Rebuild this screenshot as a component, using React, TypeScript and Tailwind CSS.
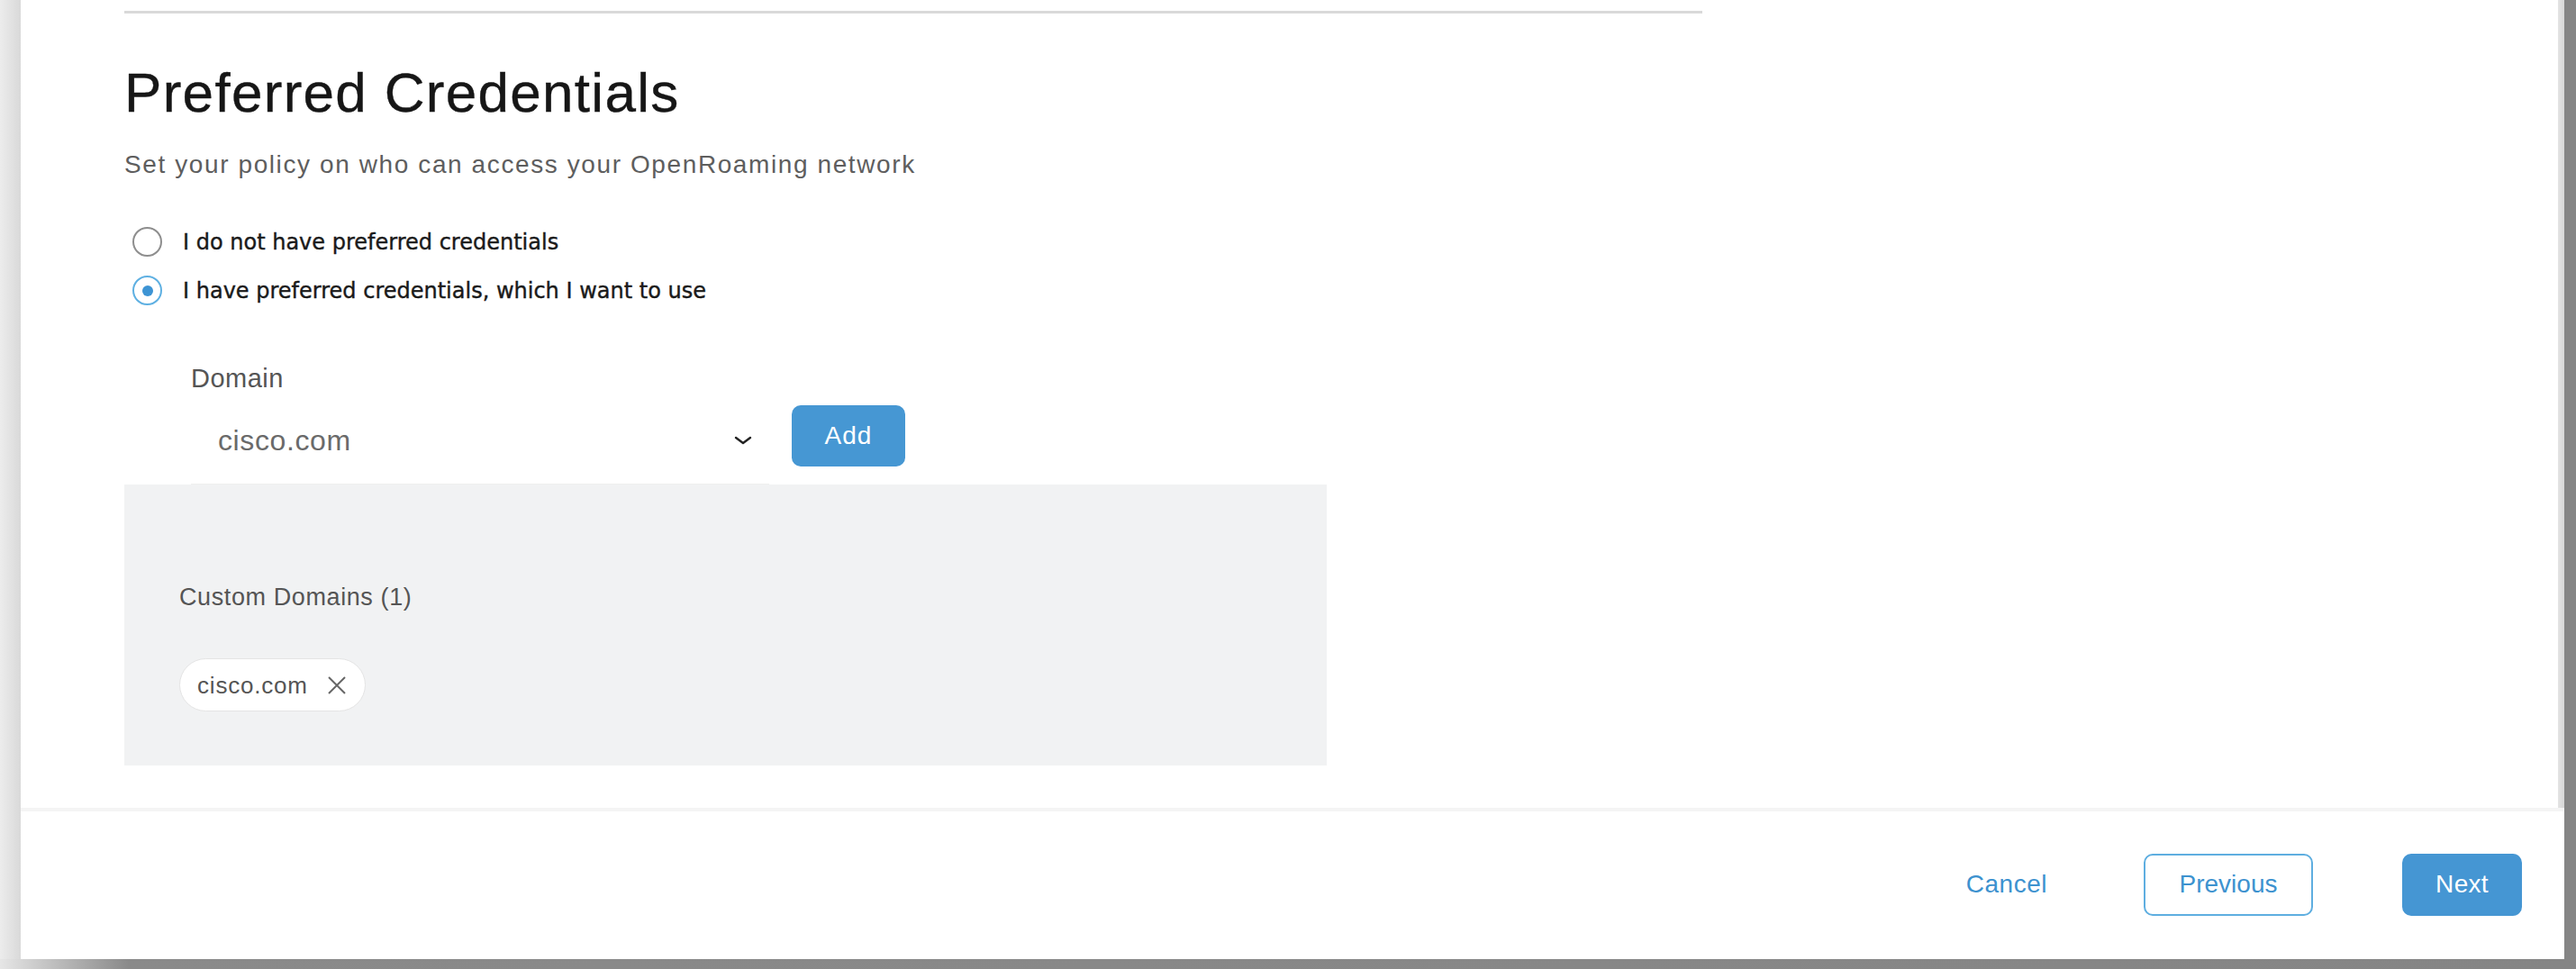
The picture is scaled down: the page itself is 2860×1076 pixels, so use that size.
import { useState } from 'react';

const sans = "font-['Liberation_Sans',Arial,sans-serif]";

function Radio({ checked, label, onClick }: { checked: boolean; label: string; onClick: () => void }) {
  return (
    <button type="button" onClick={onClick} className="flex h-[33px] items-center gap-[23px] pl-[9px] text-left">
      <span
        className={
          checked
            ? 'flex h-[33px] w-[33px] items-center justify-center rounded-full border-2 border-[#5eb0e2] bg-white'
            : 'flex h-[33px] w-[33px] items-center justify-center rounded-full border-2 border-[#8e8e8e] bg-white'
        }
      >
        {checked && <span className="h-[12px] w-[12px] rounded-full bg-[#3d94d4]" />}
      </span>
      <span className="font-['DejaVu_Sans',sans-serif] text-[24px] leading-none text-[#1a1a1a] [-webkit-text-stroke:0.4px_#1a1a1a]">
        {label}
      </span>
    </button>
  );
}

export default function App() {
  const [choice, setChoice] = useState(1);
  const [domains, setDomains] = useState(['cisco.com']);

  return (
    <div className={`flex h-[1076px] w-[2860px] flex-col bg-[#858585] ${sans}`}>
      <div className="flex flex-1">
        <div className="w-[23px] bg-gradient-to-r from-[#ececec] to-[#d9d9d9]" />

        <div className="flex flex-1 flex-col bg-white">
          {/* scrolling body */}
          <div className="flex h-[897px]">
            <div className="flex-1 pl-[115px] pt-[12px]">
              <div className="h-[3px] w-[1752px] bg-[#d9d9d9]" />

              <h1 className="mt-[57px] text-[62px] leading-none font-normal tracking-[1.3px] text-[#161616] [-webkit-text-stroke:0.4px_#161616]">
                Preferred Credentials
              </h1>
              <p className="mt-[35px] text-[28px] leading-none tracking-[1.6px] text-[#5e5e5e]">
                Set your policy on who can access your OpenRoaming network
              </p>

              <div className="mt-[55px] flex flex-col gap-[21px]">
                <Radio checked={choice === 0} label="I do not have preferred credentials" onClick={() => setChoice(0)} />
                <Radio
                  checked={choice === 1}
                  label="I have preferred credentials, which I want to use"
                  onClick={() => setChoice(1)}
                />
              </div>

              <div className="pl-[74px]">
                <div className="mt-[67px] text-[29px] leading-none tracking-[0.5px] text-[#555]">Domain</div>
                <div className="mt-[15px] flex items-start gap-[25px]">
                  <div className="flex h-[88px] w-[642px] items-center justify-between border-b border-[#efefef] pb-[10px] pl-[30px] pr-[19px]">
                    <span className="text-[32px] leading-none tracking-[0.6px] text-[#6a6a6a]">cisco.com</span>
                    <svg width="20" height="10" viewBox="0 0 20 10" fill="none">
                      <path d="M2 2l8 6 8-6" stroke="#222" strokeWidth="2.4" strokeLinecap="round" strokeLinejoin="round" />
                    </svg>
                  </div>
                  <button
                    type="button"
                    onClick={() => !domains.includes('cisco.com') && setDomains([...domains, 'cisco.com'])}
                    className="h-[68px] w-[126px] rounded-[10px] bg-[#4697d3] text-[28px] leading-none tracking-[1px] text-white"
                  >
                    Add
                  </button>
                </div>
              </div>

              <div className="w-[1335px] bg-[#f1f2f3] pt-[112px] pb-[59px] pl-[61px]">
                <div className="text-[27px] leading-none tracking-[0.6px] text-[#555]">
                  Custom Domains ({domains.length})
                </div>
                <div className="mt-[54px] flex h-[60px] gap-3">
                  {domains.map((d) => (
                    <div
                      key={d}
                      className="flex h-[59px] items-center gap-[21px] rounded-full border border-[#e4e4e4] bg-white pl-[19px] pr-[20px]"
                    >
                      <span className="text-[26px] leading-none tracking-[0.8px] text-[#555]">{d}</span>
                      <button type="button" onClick={() => setDomains(domains.filter((x) => x !== d))}>
                        <svg width="22" height="20" viewBox="0 0 22 20" fill="none">
                          <path d="M2 1l18 18M20 1L2 19" stroke="#666" strokeWidth="2" />
                        </svg>
                      </button>
                    </div>
                  ))}
                </div>
              </div>
            </div>
            <div className="w-[7px] bg-gradient-to-r from-[#e4e4e4] to-[#d6d6d6]" />
          </div>

          {/* footer */}
          <div className="flex flex-1 items-center justify-end border-t-[4px] border-[#f4f4f4] pr-[47px] pb-[2px]">
            <button type="button" className="text-[28px] leading-none tracking-[0.5px] text-[#3d92cf]">
              Cancel
            </button>
            <button
              type="button"
              className="ml-[107px] h-[69px] w-[188px] rounded-[10px] border-2 border-[#5eaee0] text-[28px] leading-none text-[#3d92cf]"
            >
              Previous
            </button>
            <button
              type="button"
              className="ml-[99px] h-[69px] w-[133px] rounded-[10px] bg-[#4596d3] text-[28px] leading-none tracking-[0.3px] text-white"
            >
              Next
            </button>
          </div>
        </div>

        <div className="w-[13px] bg-[#858585]" />
      </div>
      <div className="h-[11px] bg-gradient-to-r from-[#e6e6e6] via-[#8a8a8a] via-[5%] to-[#858585]" />
    </div>
  );
}
